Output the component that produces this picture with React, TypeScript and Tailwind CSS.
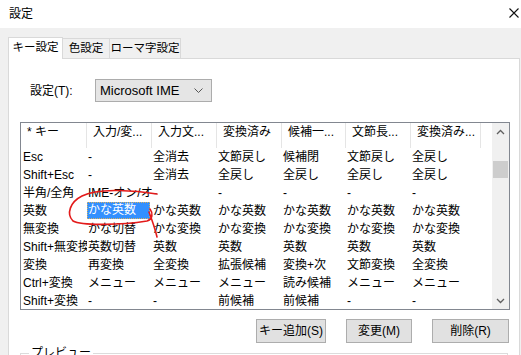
import React from 'react';

const font = { fontFamily: '"Liberation Sans", "Noto Sans CJK JP", sans-serif' };

const columns = [
  { label: '* キー', w: 'w-[66px]' },
  { label: '入力/変...', w: 'w-[65px]' },
  { label: '入力文...', w: 'w-[65px]' },
  { label: '変換済み', w: 'w-[65px]' },
  { label: '候補一...', w: 'w-[64px]' },
  { label: '文節長...', w: 'w-[65px]' },
  { label: '変換済み...', w: 'w-[70px]' },
];

const rows: string[][] = [
  ['Esc', '-', '全消去', '文節戻し', '候補閉', '文節戻し', '全戻し'],
  ['Shift+Esc', '-', '全消去', '全戻し', '全戻し', '全戻し', '全戻し'],
  ['半角/全角', 'IME-オン/オフ', '-', '-', '-', '-', '-'],
  ['英数', 'かな英数', 'かな英数', 'かな英数', 'かな英数', 'かな英数', 'かな英数'],
  ['無変換', 'かな切替', 'かな変換', 'かな変換', 'かな変換', 'かな変換', 'かな変換'],
  ['Shift+無変換', '英数切替', '英数', '英数', '英数', '英数', '英数'],
  ['変換', '再変換', '全変換', '拡張候補', '変換+次', '文節変換', '全変換'],
  ['Ctrl+変換', 'メニュー', 'メニュー', 'メニュー', '読み候補', 'メニュー', 'メニュー'],
  ['Shift+変換', '-', '-', '前候補', '前候補', '-', '-'],
];

function Chevron({ up }: { up?: boolean }) {
  return (
    <svg width="9" height="6" viewBox="0 0 9 6">
      <polyline
        points={up ? '1,5 4.5,1.5 8,5' : '1,1 4.5,4.5 8,1'}
        fill="none"
        stroke="#606060"
        strokeWidth="1.3"
      />
    </svg>
  );
}

export default function App() {
  return (
    <div
      className="relative w-[521px] h-[355px] overflow-hidden bg-[#f0f0f0] text-[12px] text-black"
      style={font}
    >
      {/* title bar */}
      <div className="h-[28px] bg-white flex items-center justify-between pl-[9px] pr-[2px]">
        <span className="leading-[16px]">設定</span>
        <svg width="10" height="10" viewBox="0 0 10 10" className="mb-[3px]">
          <path d="M0.5 0.5 L9.5 9.5 M9.5 0.5 L0.5 9.5" stroke="#111" strokeWidth="1.1" />
        </svg>
      </div>

      <div className="pt-[9px] pl-[8px]">
        {/* tabs */}
        <div className="flex items-end h-[21px] text-[11.5px] whitespace-nowrap">
          <div className="relative z-10 h-[22px] -mb-px w-[55px] bg-white border-x border-t border-[#d9d9d9] flex items-center justify-center pb-[2px]">
            キー設定
          </div>
          <div className="h-[20px] w-[47px] border-t border-r border-[#d9d9d9] flex items-center justify-center">
            色設定
          </div>
          <div className="h-[20px] w-[71px] border-t border-r border-[#d9d9d9] flex items-center justify-center">
            ローマ字設定
          </div>
        </div>

        {/* panel */}
        <div className="w-[512px] h-[320px] bg-white border border-[#d9d9d9]">
          <div className="pt-[20px] pl-[21px] flex items-center">
            <span className="w-[65px]">設定(T):</span>
            <div className="w-[117px] h-[23px] bg-[#e5e5e5] border border-[#acacac] flex items-center justify-between pl-[4px] pr-[8px]">
              <span className="text-[13px]">Microsoft IME</span>
              <svg width="9" height="5" viewBox="0 0 9 5">
                <polyline points="0.5,0.5 4.5,4.5 8.5,0.5" fill="none" stroke="#555" strokeWidth="1" />
              </svg>
            </div>
          </div>

          {/* list view */}
          <div className="mt-[20px] ml-[11px] w-[490px] h-[188px] border border-[#828790] flex overflow-hidden">
            <div className="flex-1 flex flex-col overflow-hidden">
              <div className="flex h-[25px] shrink-0">
                {columns.map((c) => (
                  <div
                    key={c.label}
                    className={`${c.w} shrink-0 border-r border-[#e5e5e5] pl-[6px] pt-[1px] leading-[16px] whitespace-nowrap overflow-hidden`}
                  >
                    {c.label}
                  </div>
                ))}
              </div>
              {rows.map((r, ri) => (
                <div key={r[0]} className="flex h-[18px] shrink-0">
                  {r.map((cell, ci) => {
                    const selected = ri === 3 && ci === 1;
                    return (
                      <div
                        key={ci}
                        className={`${columns[ci].w} shrink-0 leading-[18px] whitespace-nowrap overflow-hidden ${
                          ci === 0 ? 'pl-[2px]' : 'pl-px'
                        }`}
                      >
                        {selected ? (
                          <span className="block w-[63px] h-[17px] leading-[16px] -ml-px pl-px bg-[#3390ff] text-white outline-1 outline-dotted outline-[#d8b060] -outline-offset-1">
                            {cell}
                          </span>
                        ) : (
                          cell
                        )}
                      </div>
                    );
                  })}
                </div>
              ))}
            </div>

            {/* scrollbar */}
            <div className="w-[17px] shrink-0 bg-[#f0f0f0] flex flex-col">
              <div className="h-[17px] flex items-center justify-center">
                <Chevron up />
              </div>
              <div className="h-[21px]" />
              <div className="h-[17px] mx-px bg-[#cdcdcd]" />
              <div className="flex-1" />
              <div className="h-[17px] flex items-center justify-center">
                <Chevron />
              </div>
            </div>
          </div>

          {/* buttons */}
          <div className="mt-[9px] flex justify-end gap-[20px] pr-[10px]">
            <button className="w-[70px] h-[24px] bg-[#e1e1e1] border border-[#adadad]">キー追加(S)</button>
            <button className="w-[66px] h-[24px] bg-[#e1e1e1] border border-[#adadad]">変更(M)</button>
            <button className="w-[77px] h-[24px] bg-[#e1e1e1] border border-[#adadad]">削除(R)</button>
          </div>

          {/* group box */}
          <fieldset className="mt-[3px] mx-[11px] h-[60px] border border-[#dcdcdc] px-[8px]">
            <legend className="px-[2px] leading-[14px]">プレビュー</legend>
          </fieldset>
        </div>
      </div>

      {/* red hand-drawn annotation */}
      <svg className="absolute inset-0 pointer-events-none" width="521" height="355" viewBox="0 0 521 355">
        <path
          d="M157 194 C130 189 96 189 82 196 C70 202 66 214 73 221 C82 226 122 225 147 221 C153 219 153 213 150 209 M149 212 C152 220 155 228 157 237"
          fill="none"
          stroke="#e31a1a"
          strokeWidth="1.6"
          strokeLinecap="round"
        />
      </svg>
    </div>
  );
}
